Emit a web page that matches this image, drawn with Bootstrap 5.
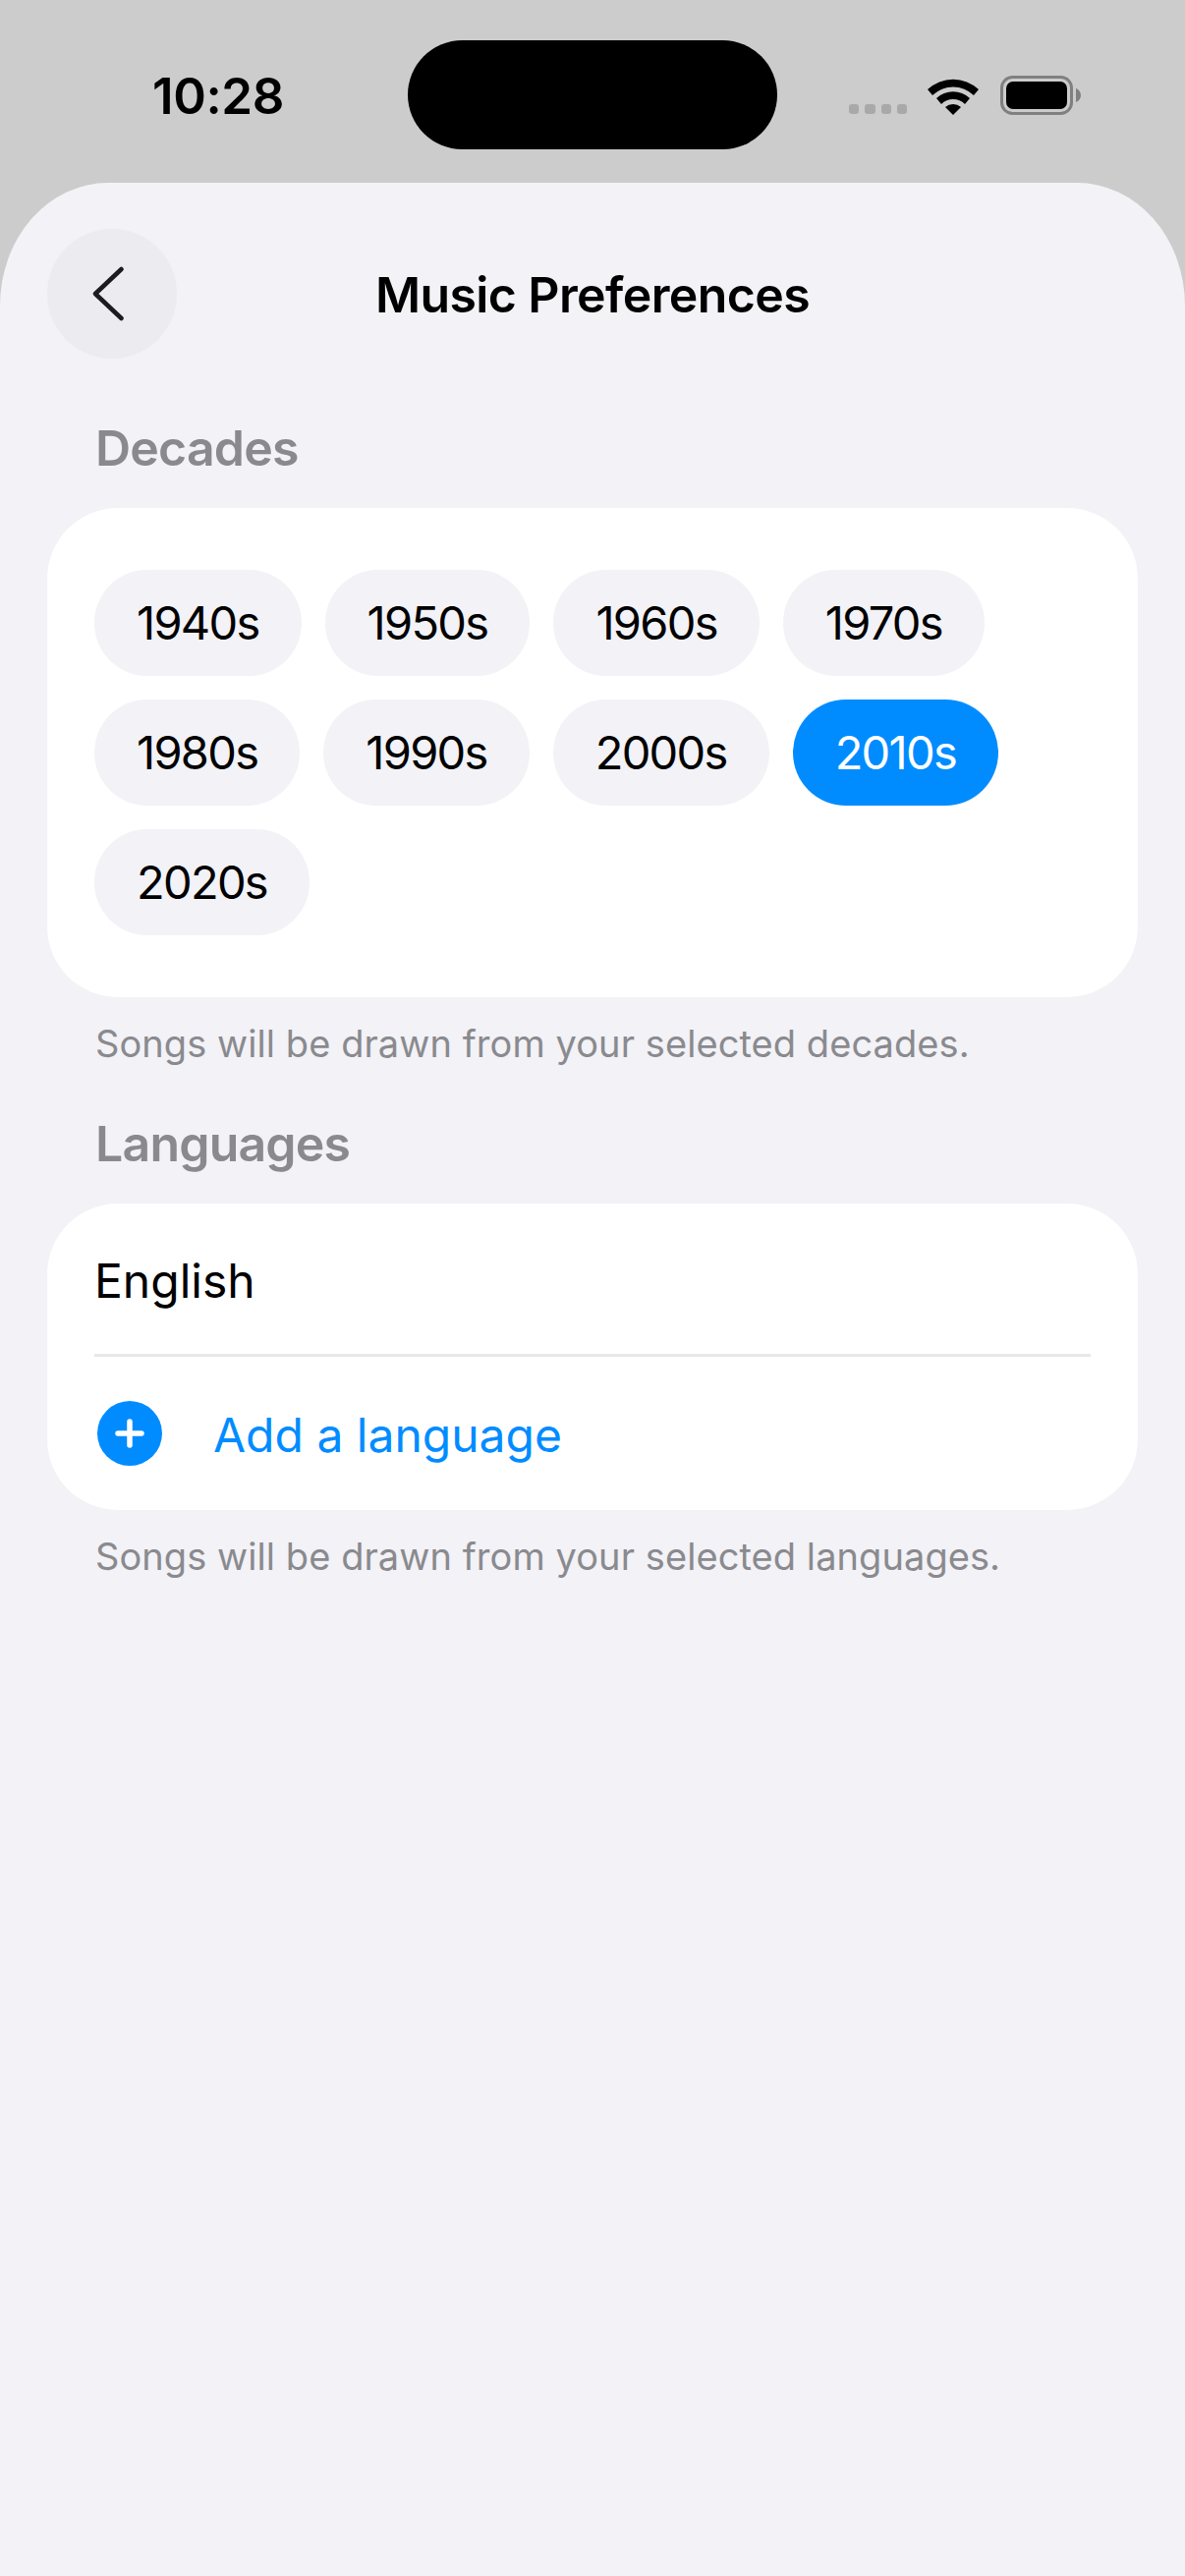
<!DOCTYPE html>
<html lang="en">
<head>
  <meta charset="UTF-8" />
  <meta name="viewport" content="width=device-width, initial-scale=1.0"/>
  <title>Music Preferences</title>
  <link rel="stylesheet" href="https://cdn.jsdelivr.net/npm/bootstrap@5.3.0/dist/css/bootstrap.min.css">
  <style>
    html, body { height: 100%; }
    body { font-family: Inter, "Liberation Sans", sans-serif; background-color: #cccccc; color: #000; overflow: hidden; }
    .status-bar { height: 186px; padding: 41px 0 0 155px; }
    .clock { width: 260px; height: 111px; font-size: 51px; font-weight: 600; line-height: 113px; letter-spacing: -0.4px; }
    .island { width: 376px; height: 111px; background: #000; border-radius: 56px; }
    .status-icons { margin-left: 73px; height: 111px; }
    .signal-dots { width: 59px; margin-top: 65px; gap: 6px; }
    .signal-dots span { width: 10.5px; height: 10px; border-radius: 3px; background: #a9a9a9; }
    .wifi-icon { margin: 38px 0 0 21px; }
    .battery-icon { margin: 36px 0 0 22px; }
    .sheet { height: 2436px; padding: 47px 48px 0; background: #f2f2f7; border-radius: 110px 110px 0 0 / 125px 125px 0 0; }
    .back-btn { width: 132px; height: 132px; background: #ebebf0; border: 0; padding: 0; }
    .back-btn svg { margin-right: 9px; }
    .page-heading { font-size: 50px; font-weight: 600; line-height: 60px; margin: 0; padding-top: 2px; letter-spacing: -0.6px; }
    .head-spacer { width: 132px; }
    .group-label { font-size: 50px; font-weight: 600; line-height: 60px; color: #8a8a8e; margin: 0 0 0 49px; letter-spacing: -0.8px; }
    .label-one { margin-top: 61px; margin-bottom: 31px; }
    .label-two { margin-top: 48px; margin-bottom: 31px; }
    .group-box { background: #fff; border-radius: 72px; }
    .decades-box { padding: 63px 48px; height: 498px; }
    .decade-chip { height: 108px; padding: 0 43px; border-radius: 54px; background: #f2f2f7; color: #000; font-size: 47px; line-height: 108px; letter-spacing: -1.7px; border: 0; }
    .decade-chip.picked { background: #008cff; color: #fff; }
    .chip-gap { gap: 24px; }
    .group-note { font-size: 38px; line-height: 48px; color: #8a8a8e; margin: 23px 0 0 49px; letter-spacing: .07px; }
    .lang-box { height: 312px; padding: 0 48px; }
    .lang-row { height: 153px; font-size: 48px; line-height: 60px; padding-top: 5px; }
    .lang-rule { height: 3px; background: #e8e8ea; }
    .add-row { height: 156px; color: #008cff; gap: 52px; padding: 0 0 0 3px; }
    .add-row span { padding-top: 3px; }
  </style>
</head>
<body>

<div class="status-bar d-flex align-items-start">
  <div class="clock">10:28</div>
  <div class="island"></div>
  <div class="status-icons d-flex align-items-start">
    <div class="signal-dots d-flex"><span></span><span></span><span></span><span></span></div>
    <svg class="wifi-icon" width="52" height="38" viewBox="0 0 52 38">
      <path d="M0 12 A38 38 0 0 1 52 12 L47 18 A30 30 0 0 0 5 18 Z" fill="#000"/>
      <path d="M9 21 A25 25 0 0 1 43 21 L38 27 A17 17 0 0 0 14 27 Z" fill="#000"/>
      <path d="M18 30 A12 12 0 0 1 34 30 L26 38 Z" fill="#000"/>
    </svg>
    <svg class="battery-icon" width="84" height="41" viewBox="0 0 84 41">
      <rect x="1.5" y="1.5" width="71" height="37" rx="11" fill="none" stroke="#808080" stroke-width="3"/>
      <rect x="6" y="6" width="62" height="28" rx="7" fill="#000"/>
      <path d="M77 13 C80 14 82 17 82 20 C82 23 80 26 77 27 Z" fill="#808080"/>
    </svg>
  </div>
</div>

<main class="sheet">
  <div class="d-flex align-items-center">
    <button class="back-btn rounded-circle d-flex align-items-center justify-content-center" type="button" aria-label="Back">
      <svg width="32" height="56" viewBox="0 0 32 56">
        <path d="M29.5 3 L3 28 L29.5 53" fill="none" stroke="#1c1c1e" stroke-width="4.5" stroke-linecap="round" stroke-linejoin="round"/>
      </svg>
    </button>
    <h1 class="page-heading flex-grow-1 text-center">Music Preferences</h1>
    <div class="head-spacer"></div>
  </div>

  <h2 class="group-label label-one">Decades</h2>
  <section class="group-box decades-box">
    <div class="d-flex flex-wrap chip-gap">
      <button class="decade-chip" type="button">1940s</button>
      <button class="decade-chip" type="button">1950s</button>
      <button class="decade-chip" type="button">1960s</button>
      <button class="decade-chip" type="button">1970s</button>
      <button class="decade-chip" type="button">1980s</button>
      <button class="decade-chip" type="button">1990s</button>
      <button class="decade-chip" type="button">2000s</button>
      <button class="decade-chip picked" type="button">2010s</button>
      <button class="decade-chip" type="button">2020s</button>
    </div>
  </section>
  <p class="group-note">Songs will be drawn from your selected decades.</p>

  <h2 class="group-label label-two">Languages</h2>
  <section class="group-box lang-box">
    <div class="lang-row d-flex align-items-center">English</div>
    <div class="lang-rule"></div>
    <div class="lang-row add-row d-flex align-items-center">
      <svg width="66" height="66" viewBox="0 0 66 66">
        <circle cx="33" cy="33" r="33" fill="#008cff"/>
        <path d="M33 21 V45 M21 33 H45" stroke="#fff" stroke-width="5.5" stroke-linecap="round"/>
      </svg>
      <span>Add a language</span>
    </div>
  </section>
  <p class="group-note">Songs will be drawn from your selected languages.</p>
</main>

<script src="https://cdn.jsdelivr.net/npm/bootstrap@5.3.0/dist/js/bootstrap.bundle.min.js"></script>
</body>
</html>
